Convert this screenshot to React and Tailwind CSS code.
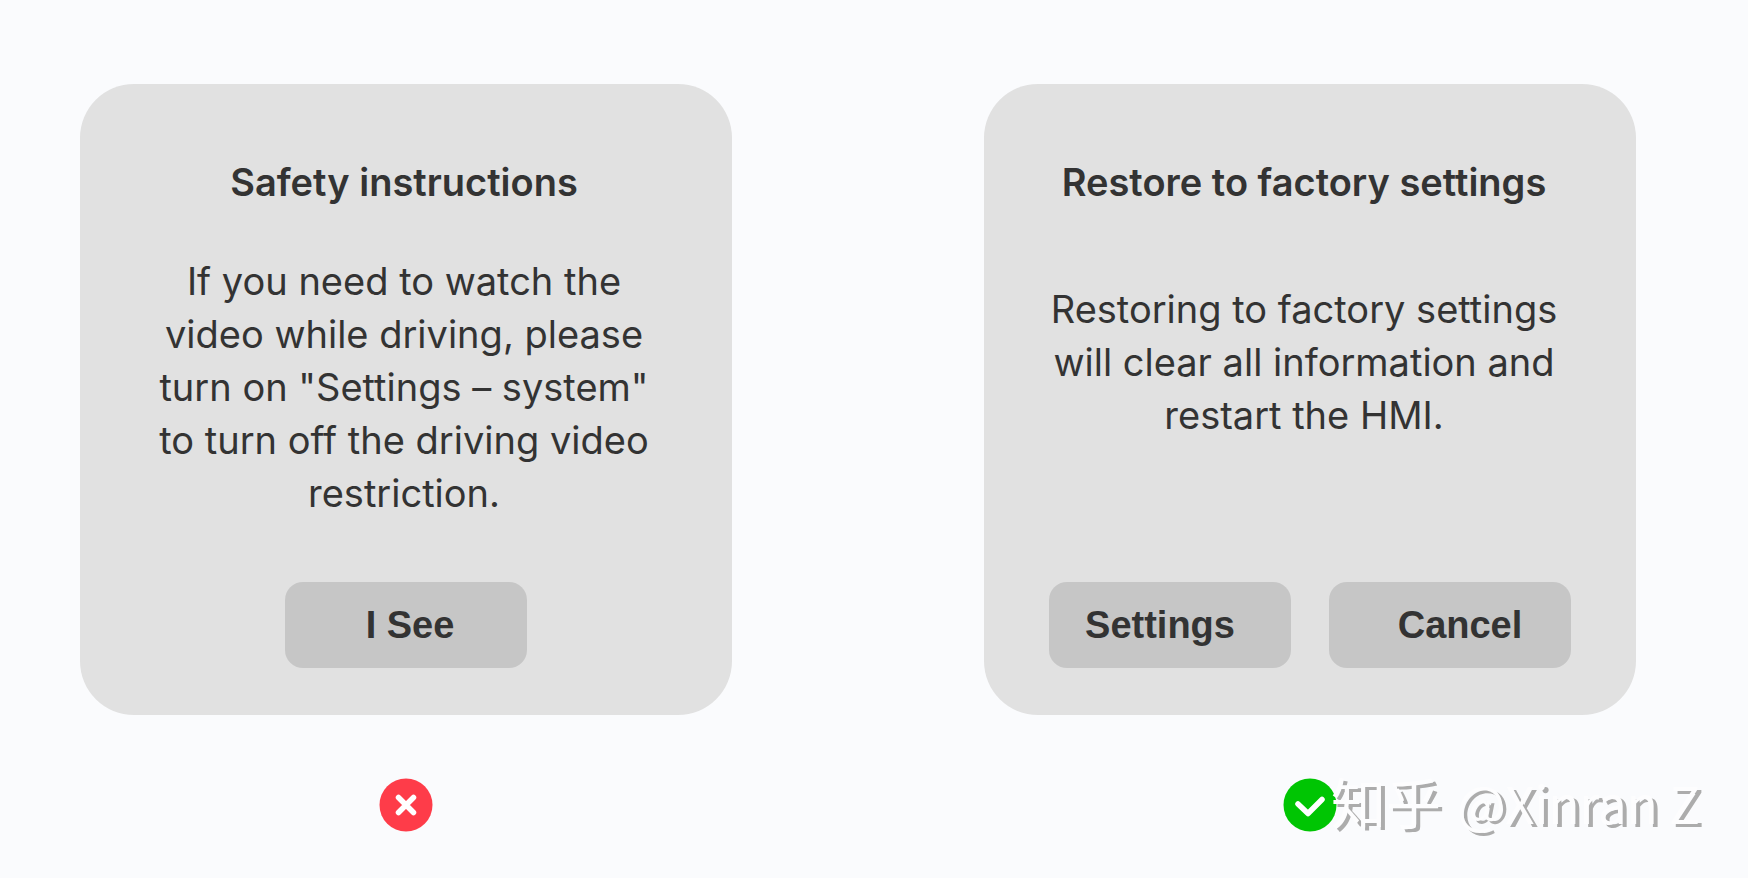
const cards = [
  {
    title: 'Safety instructions',
    titleClass: 'pl-14 pr-15',
    body: 'If you need to watch the video while driving, please turn on "Settings – system" to turn off the driving video restriction.',
    bodyClass: 'pl-17 pr-18 pt-[49px]',
    actions: [{ label: 'I See', className: 'pl-2' }],
    ok: false,
  },
  {
    title: 'Restore to factory settings',
    titleClass: 'pl-14 pr-17',
    body: 'Restoring to factory settings will clear all information and restart the HMI.',
    bodyClass: 'pl-14 pr-17 pt-[77px]',
    actions: [
      { label: 'Settings', className: 'pr-5' },
      { label: 'Cancel', className: 'pl-5' },
    ],
    ok: true,
  },
];

const StatusIcon = ({ ok }) => (
  <svg
    className="size-[54px]"
    viewBox="0 0 54 54"
    fill="none"
    stroke="#fff"
    strokeWidth="5.5"
    strokeLinecap="round"
    strokeLinejoin="round"
    role="img"
    aria-label={ok ? 'Correct' : 'Incorrect'}
  >
    <circle cx="27" cy="27" r="26.5" fill={ok ? '#00c503' : '#fe3c49'} stroke="none" />
    {ok ? <path d="M15 26l10 9.5L39 21.5" /> : <path d="M19.5 19.5l15 15M34.5 19.5l-15 15" />}
  </svg>
);

const Card = ({ title, titleClass, body, bodyClass, actions }) => (
  <section className="flex flex-col min-h-[631px] rounded-[54px] bg-[#e1e1e1] pt-[74px] pb-[47px] text-center text-[#333333]">
    <h2 className={`text-[38px] leading-[48px] font-semibold ${titleClass}`}>{title}</h2>
    <p className={`text-[38px] leading-[53px] ${bodyClass}`}>{body}</p>
    <div className="mt-auto flex justify-center gap-[38px]">
      {actions.map(({ label, className }) => (
        <button
          key={label}
          type="button"
          className={`h-[86px] w-[242px] rounded-[18px] bg-[#c6c6c6] font-['Liberation_Sans',sans-serif] text-[38px] font-bold ${className}`}
        >
          {label}
        </button>
      ))}
    </div>
  </section>
);

const App = () => {
  return (
    <main className="relative min-h-screen bg-[#fafbfd] pt-[84px] pl-20 pr-28 font-['Inter',sans-serif]">
      <div className="grid grid-cols-2 gap-x-[252px]">
        {cards.map((card) => (
          <div key={card.title}>
            <Card {...card} />
            <div className="flex justify-center pt-[63px]">
              <StatusIcon ok={card.ok} />
            </div>
          </div>
        ))}
      </div>
      {/* Watermark */}
      <p className="absolute right-12 bottom-11 flex items-baseline gap-4 font-['Noto_Sans_CJK_SC',sans-serif] text-[51px] leading-[64px] whitespace-nowrap text-[#fdfdfe] [text-shadow:4px_3px_0_#acacac]">
        <span className="text-[55px]">知乎</span>
        <span>@Xinran Z</span>
      </p>
    </main>
  );
};

export default App;
